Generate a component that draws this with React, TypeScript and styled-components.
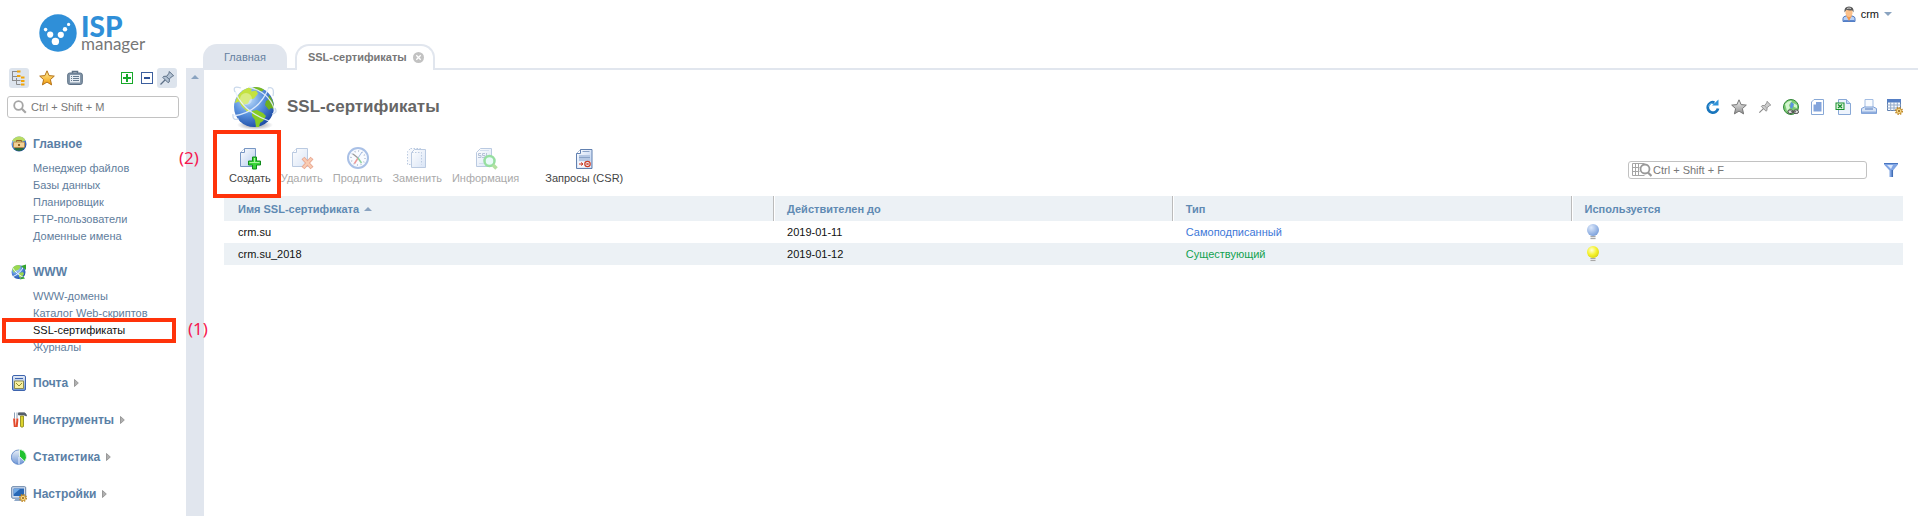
import React from "react";
import styled, { createGlobalStyle } from "styled-components";

const FRAME = "#e1e6ee";
const BAND = "#ecf1f5";
const MARK = "#ff330a";

const GlobalStyle = createGlobalStyle`
  *, *::before, *::after { box-sizing: border-box; }
  body {
    margin: 0;
    background: #fff;
    color: #111;
    font: 11px/16px "Liberation Sans", Arial, sans-serif;
  }
  button { font: inherit; color: inherit; background: none; border: 0; padding: 0; cursor: pointer; }
  a { color: inherit; text-decoration: none; }
  ul { list-style: none; margin: 0; padding: 0; }
  svg { display: block; flex: none; }
`;

const Page = styled.div`
  min-height: 100vh;
  display: flex;
  flex-direction: column;
`;

const Header = styled.header`
  display: flex;
  height: 68px;
`;

const Logo = styled.a`
  display: flex;
  align-items: flex-start;
  gap: 4px;
  width: 203px;
  padding: 14px 0 0 39px;
`;

const LogoWords = styled.span`
  display: flex;
  flex-direction: column;
  font-family: Lato, sans-serif;
`;

const LogoTop = styled.span`
  font-size: 28px;
  line-height: 24px;
  font-weight: 900;
  color: #2f8fd8;
`;

const LogoBottom = styled.span`
  font-size: 17px;
  line-height: 12px;
  color: #777;
`;

const Tabs = styled.nav`
  display: flex;
  align-items: flex-end;
  gap: 8px;
  flex: 1;
  margin-bottom: -2px;
  position: relative;
`;

const Tab = styled.div<{ $active?: boolean }>`
  display: flex;
  align-items: center;
  gap: 6px;
  height: 26px;
  padding: ${(p) => (p.$active ? "0 9px 2px 11px" : "0 21px")};
  border: 2px solid ${FRAME};
  border-width: ${(p) => (p.$active ? "2px 2px 0" : "0")};
  border-radius: 14px 14px 0 0;
  background: ${(p) => (p.$active ? "#fff" : FRAME)};
  color: ${(p) => (p.$active ? "#777" : "#6480a0")};
  font-weight: ${(p) => (p.$active ? "bold" : "normal")};
`;

const UserButton = styled.button`
  display: flex;
  align-items: center;
  align-self: flex-start;
  gap: 4px;
  height: 18px;
  margin: 5px 26px 0 0;
  svg:last-child { margin-left: 1px; }
`;

const Body = styled.div`
  display: flex;
  flex: 1;
`;

const Sidebar = styled.aside`
  width: 186px;
  flex: none;
`;

const SideTools = styled.div`
  display: flex;
  justify-content: space-between;
  padding: 0 9px;
`;

const ToolGroup = styled.div<{ $gap?: number }>`
  display: flex;
  gap: ${(p) => p.$gap ?? 0}px;
`;

const SideTool = styled.button<{ $on?: boolean }>`
  display: flex;
  align-items: center;
  justify-content: center;
  width: 20px;
  height: 20px;
  border-radius: 3px;
  background: ${(p) => (p.$on ? "#dde4ed" : "transparent")};
`;

const SearchBox = styled.label<{ $compact?: boolean }>`
  display: flex;
  align-items: center;
  gap: ${(p) => (p.$compact ? 1 : 4)}px;
  height: ${(p) => (p.$compact ? 18 : 22)}px;
  padding: 0 ${(p) => (p.$compact ? 3 : 5)}px;
  border: 1px solid #c2c2c2;
  border-radius: 3px;
  background: #fff;
  input {
    flex: 1;
    min-width: 0;
    padding: 0;
    border: 0;
    outline: 0;
    background: none;
    font: inherit;
    color: #333;
  }
  input::placeholder { color: #777; opacity: 1; }
`;

const SideSearch = styled(SearchBox)`
  margin: 8px 7px 16px;
`;

const Section = styled.section`
  margin-bottom: 17px;
`;

const SectionHead = styled.button`
  display: flex;
  align-items: center;
  gap: 6px;
  height: 20px;
  padding-left: 11px;
  font-size: 12px;
  font-weight: bold;
  color: #5a80a6;
`;

const MenuList = styled.ul`
  padding-top: 6px;
`;

const MenuItem = styled.li<{ $active?: boolean }>`
  position: relative;
  padding-left: 33px;
  line-height: 17px;
  color: ${(p) => (p.$active ? "#111" : "#5f7d9c")};
`;

const Strip = styled.button`
  display: flex;
  justify-content: center;
  align-items: flex-start;
  flex: none;
  width: 18px;
  padding-top: 7px;
  background: ${FRAME};
`;

const Main = styled.main`
  flex: 1;
  min-width: 0;
  padding: 14px 15px 20px 20px;
  border-top: 2px solid ${FRAME};
`;

const TitleRow = styled.div`
  display: flex;
  align-items: center;
  gap: 9px;
  padding-left: 8px;
  margin-bottom: 16px;
`;

const Title = styled.h1`
  flex: 1;
  margin: 0;
  font-size: 17px;
  line-height: 20px;
  color: #666;
`;

const Toolbar = styled.div`
  display: flex;
  align-items: flex-end;
  gap: 10px;
  padding: 0 4px 0 5px;
  margin-bottom: 10px;
`;

const ToolCell = styled.div<{ $apart?: boolean }>`
  position: relative;
  margin-left: ${(p) => (p.$apart ? 16 : 0)}px;
`;

const ToolButton = styled.button`
  display: flex;
  flex-direction: column;
  align-items: center;
  color: #444;
  white-space: nowrap;
  &:disabled { color: #aaa; cursor: default; }
  &:disabled svg { opacity: 0.5; }
`;

const FilterArea = styled.div`
  display: flex;
  align-items: center;
  gap: 16px;
  margin: 0 0 7px auto;
`;

const TableSearch = styled(SearchBox)`
  width: 239px;
`;

const Mark = styled.span<{ $x: number; $y: number; $w: number; $h: number }>`
  position: absolute;
  z-index: 2;
  left: ${(p) => p.$x}px;
  top: ${(p) => p.$y}px;
  width: ${(p) => p.$w}px;
  height: ${(p) => p.$h}px;
  border: 4px solid ${MARK};
  pointer-events: none;
`;

const MarkLabel = styled.span<{ $x: number; $y: number }>`
  position: absolute;
  z-index: 2;
  left: ${(p) => p.$x}px;
  top: ${(p) => p.$y}px;
  font: 17px/20px "Noto Sans", sans-serif;
  color: #f5174f;
`;

const Table = styled.table`
  width: 100%;
  table-layout: fixed;
  border-collapse: separate;
  border-spacing: 0;
  th, td { padding: 0 14px; text-align: left; }
  th {
    height: 25px;
    background: ${BAND};
    color: #5f8ab3;
  }
  th + th { border-left: 1px solid #bbb; box-shadow: inset 1px 0 #fff; padding-left: 13px; }
  td { height: 22px; }
  th:nth-child(1) { width: 32.7%; }
  th:nth-child(2), th:nth-child(3) { width: 23.75%; }
  tbody tr:nth-child(even) { background: ${BAND}; }
`;

const SortButton = styled.button`
  display: flex;
  align-items: center;
  gap: 5px;
  font-weight: bold;
`;

const Kind = styled.span<{ $color: string }>`
  color: ${(p) => p.$color};
`;

const Svg = ({ s = 16, v = 16, children }: { s?: number; v?: number; children: React.ReactNode }) => (
  <svg width={s} height={s} viewBox={`0 0 ${v} ${v}`} fill="none" aria-hidden="true">{children}</svg>
);

const DefsHolder = styled.svg`
  position: absolute;
`;

const Gradients = () => (
  <DefsHolder width="0" height="0" aria-hidden="true">
    <defs>
      <radialGradient id="sea" cx="35%" cy="30%" r="75%">
        <stop offset="0" stopColor="#c6e2fb" /><stop offset=".5" stopColor="#5b93df" /><stop offset="1" stopColor="#1c4ba5" />
      </radialGradient>
      <linearGradient id="sheet" x1="0" y1="0" x2="1" y2="1">
        <stop offset="0" stopColor="#fff" /><stop offset="1" stopColor="#b4cbee" />
      </linearGradient>
      <linearGradient id="steel" x1="0" y1="0" x2="0" y2="1">
        <stop offset="0" stopColor="#e8eef6" /><stop offset="1" stopColor="#6d96d6" />
      </linearGradient>
      <linearGradient id="gold" x1="0" y1="0" x2="0" y2="1">
        <stop offset="0" stopColor="#fff2a0" /><stop offset="1" stopColor="#f39a05" />
      </linearGradient>
      <linearGradient id="silver" x1="0" y1="0" x2="0" y2="1">
        <stop offset="0" stopColor="#f4f4f4" /><stop offset="1" stopColor="#8e8e8e" />
      </linearGradient>
      <radialGradient id="shade"><stop offset="0" stopColor="#556" stopOpacity=".7" /><stop offset="1" stopColor="#556" stopOpacity="0" /></radialGradient>
      <radialGradient id="bulbOff" cx="35%" cy="30%" r="80%"><stop offset="0" stopColor="#dce8fb" /><stop offset="1" stopColor="#7199d8" /></radialGradient>
      <radialGradient id="bulbOn" cx="40%" cy="35%" r="80%"><stop offset="0" stopColor="#ffffd8" /><stop offset=".5" stopColor="#f5f22c" /><stop offset="1" stopColor="#cdc80c" /></radialGradient>
    </defs>
  </DefsHolder>
);

const LogoMark = () => (
  <Svg s={38} v={38}>
    <circle cx="19" cy="19" r="18.7" fill="#2f8fd8" />
    <g fill="#fff">
      <circle cx="6.6" cy="15.6" r="1.8" /><circle cx="11.2" cy="20.6" r="3.1" /><circle cx="16.4" cy="27.4" r="3.7" />
      <circle cx="21.8" cy="20.8" r="3.1" /><circle cx="26" cy="15.2" r="2.2" /><circle cx="29.6" cy="10.4" r="1.6" />
    </g>
  </Svg>
);

const CloseIcon = () => (
  <Svg s={11} v={11}><circle cx="5.5" cy="5.5" r="5.5" fill="#c2c2c2" /><path d="M3.3 3.3l4.4 4.4M7.7 3.3L3.3 7.7" stroke="#fff" strokeWidth="1.3" /></Svg>
);
const UserIcon = () => (
  <Svg>
    <path d="M2 15.500v-3q0-1.700 2-2.200l2-.6h4l2 .6q2 .5 2 2.200v3z" fill="#b9d0f5" stroke="#4a75bd" />
    <path d="M2.500 14h11v1.500h-11z" fill="#5d88cf" />
    <path d="M5 9.500L8 15l3-5.500z" fill="#f39a4e" />
    <path d="M4.500 4h7v3.500q-1 3.500-3.500 3.500T4.500 7.500z" fill="#fbc08a" />
    <path d="M3.500 6.500q-.8-6 4.500-6t4.500 6l-1.300-2.300q-3 .6-5.800-.4z" fill="#5b5b5b" />
    <path d="M6 2.500q2-1 4 0" stroke="#ccc" />
  </Svg>
);
const Triangle = ({ dir, color = "#8aa3c0" }: { dir: "up" | "down"; color?: string }) => (
  <svg width="8" height="4" viewBox="0 0 8 4" aria-hidden="true"><path d={dir === "up" ? "M0 4h8L4 0z" : "M0 0h8L4 4z"} fill={color} /></svg>
);
const Chevron = () => (
  <svg width="5" height="8" viewBox="0 0 5 8" aria-hidden="true"><path d="M.5.500L4.300 4 .5 7.500z" fill="#b0b0b0" stroke="#999" /></svg>
);
const TreeIcon = () => (
  <Svg>
    <path d="M1.500 1v10M1 1.500h5M1 6.500h5M1.500 10.500h4M5.500 8v6.500H9.500M5.500 10.500h4" stroke="#8b8b8b" />
    <path d="M6 .5h3.500v2H6zM6 5h3.500v2H6zM10 6.500h3.500v2H10zM10 10h3.500v2H10zM10 13.500h3.500v2H10z" fill="#f0a30a" />
  </Svg>
);
const STAR = "M8 .8l2.100 4.800 5.200.500-3.900 3.500 1.200 5.300L8 12.100l-4.600 2.800 1.200-5.300L.7 6.100l5.200-.5z";
const StarIcon = ({ gray }: { gray?: boolean }) => (
  <Svg><path d={STAR} fill={gray ? "url(#silver)" : "url(#gold)"} stroke={gray ? "#777" : "#b4731a"} strokeLinejoin="round" /></Svg>
);
const CaseIcon = () => (
  <Svg>
    <path d="M5.500 3V1.500h5V3" stroke="#5f7286" strokeWidth="1.500" />
    <rect x=".7" y="3" width="14.600" height="11.500" rx="2" fill="#8395a8" stroke="#5b6f84" />
    <rect x="3" y="5" width="10" height="7.500" fill="#e6ecf2" />
    <path d="M4 6.500h1M6 6.500h6M4 8.500h1M6 8.500h6M4 10.500h1M6 10.500h6" stroke="#667b90" />
  </Svg>
);
const BoxIcon = ({ plus }: { plus?: boolean }) => (
  <Svg s={12} v={12}>
    <rect x=".5" y=".5" width="11" height="11" fill="#fff" stroke={plus ? "#17a92a" : "#3c5f9e"} />
    <path d={plus ? "M2 6h8M6 2v8" : "M3 6h6"} stroke={plus ? "#17a92a" : "#2d5196"} strokeWidth="2" />
  </Svg>
);
const PinIcon = ({ light }: { light?: boolean }) => (
  <Svg s={light ? 14 : 16}>
    <path d="M1.500 14.500L6.500 9.500" stroke={light ? "#888" : "#5c6f86"} strokeWidth="1.300" />
    <path d="M10.300 1.500l4.300 4.300-1.400.600-2.800 2.400-.2 3.200-1 .8-5.400-5.400.8-1 3.200-.2 2.200-3z" fill={light ? "#ccc" : "#b3c2d3"} stroke={light ? "#8c8c8c" : "#5c6f86"} strokeLinejoin="round" />
    <path d="M7.300 6.500l2.600 2.600" stroke={light ? "#999" : "#5c6f86"} />
  </Svg>
);
const Magnifier = () => (
  <Svg s={14} v={14}><circle cx="5.500" cy="5.500" r="4.300" stroke="#a5a5a5" strokeWidth="1.800" /><path d="M8.800 8.800l4 4" stroke="#a5a5a5" strokeWidth="2.200" /></Svg>
);
const GridMagnifier = () => (
  <svg width="20" height="14" viewBox="0 0 20 14" fill="none" aria-hidden="true">
    <path d="M.5.500h12M.5 4.500h7M.5 8.500h7M.5 12.500h12M.5.500v12M3.500.500v12M6.500.500v12" stroke="#a5a5a5" />
    <circle cx="13" cy="6" r="4.500" fill="#fff" stroke="#999" strokeWidth="1.800" /><path d="M16 9.500l3.500 3.500" stroke="#999" strokeWidth="2.200" />
  </svg>
);
const MainIcon = () => (
  <Svg>
    <circle cx="8" cy="8" r="7.500" fill="url(#sea)" />
    <path d="M1 5q3-5 8-4.500 4 .5 5.500 4L9 6 3 5.500z" fill="#b9dc63" />
    <path d="M3 13q5 4 10 0l-2-2H5z" fill="#2b6c3b" />
    <path d="M5.500 6V4.500h5V6" stroke="#91602b" />
    <rect x="2.500" y="6" width="11" height="5.500" rx="1" fill="#f2d195" stroke="#b58a4c" />
    <path d="M7 8h2v2H7z" fill="#946126" />
  </Svg>
);
const WwwIcon = () => (
  <Svg>
    <circle cx="7.500" cy="8" r="7" fill="url(#sea)" />
    <path d="M1 5q2-4 7-4l2 2-3 3-3 1-1 2zM8 9l4-1 1 2-3 4-2-1z" fill="#9ad850" />
    <path d="M1 3q5 8 13 11M1 13Q9 10 13 2" stroke="#eef5ff" />
    <path d="M10 2l5-1.500L15 6z" fill="#34a52c" />
    <path d="M8.500 15.500l3.500-3 2 2z" fill="#34a52c" />
  </Svg>
);
const MailIcon = () => (
  <Svg>
    <rect x="1.500" y=".5" width="13" height="15" rx="1.500" fill="url(#steel)" stroke="#3e64ae" />
    <path d="M4 3.500h8" stroke="#3e64ae" /><path d="M3.500 6h9v7.500h-9z" fill="#f8f0a0" stroke="#8a8a50" />
    <path d="M5 8l3 3 3-3" stroke="#8f8a30" />
  </Svg>
);
const ToolsIcon = () => (
  <Svg>
    <path d="M3.500 .5v6M6 .5v6" stroke="#8a9fb6" />
    <path d="M3.200 6.500v2l.6 6.500M6.300 6.500v2l-.6 6.500" stroke="#e2492b" strokeWidth="2" />
    <path d="M7.500.8h6q2 .8 2 3.200L13 3H7.500z" fill="#5e6977" stroke="#333c46" strokeWidth=".6" />
    <path d="M9.500 4h3v10.500q-1.500 1.500-3 0z" fill="#ddd42c" stroke="#858013" strokeWidth=".8" />
  </Svg>
);
const StatsIcon = () => (
  <Svg>
    <circle cx="7.500" cy="8.200" r="7.200" fill="url(#steel)" stroke="#4775be" strokeWidth=".7" />
    <path d="M8.500 .3A7.500 7.500 0 0 1 13.800 12.500L8.500 7.500z" fill="#20c22f" stroke="#fff" strokeWidth=".8" />
    <path d="M8 8v7.500" stroke="#eef4ff" />
  </Svg>
);
const Gear = ({ x, y }: { x: number; y: number }) => (
  <g>
    <circle cx={x} cy={y} r="3.200" stroke="#bd8521" strokeWidth="1.600" strokeDasharray="1.500 1" />
    <circle cx={x} cy={y} r="2.600" fill="#f7dc8b" stroke="#c58d27" strokeWidth=".7" /><circle cx={x} cy={y} r="1" fill="#966112" />
  </g>
);
const SettingsIcon = () => (
  <Svg>
    <rect x=".7" y=".7" width="14" height="11.500" rx="1" fill="#cfddf0" stroke="#6480a4" />
    <rect x="2.500" y="2.500" width="10.500" height="7.500" fill="#2767b5" /><path d="M3 3h6L3 8z" fill="#6fa8e5" />
    <path d="M5 12h5l1 3H3z" fill="#8fa9ca" /><Gear x={12} y={12} />
  </Svg>
);
const BigGlobe = () => (
  <Svg s={46} v={46}>
    <ellipse cx="23" cy="41" rx="18" ry="5" fill="url(#shade)" />
    <circle cx="22" cy="23" r="20" fill="url(#sea)" />
    <path d="M3 19Q6 7 17 3.500l3 1-1 3 5-1 2 3-4 5-4 1-2 4-4 1 1 4 4 1 2 3-4-1-5-5-3-5z" fill="#c4e23f" />
    <path d="M20 3.500q6-1.500 12 2l-2 2-5-1z" fill="#7abb1f" />
    <path d="M20 27l5-1 6 3 3 3-3 5-3 2-1 4-3 0-1-7-3-4z" fill="#86cb24" />
    <path d="M37 11q5 6 5 14l-3-1-2 2-4-5 1-4 2-1z" fill="#6db01f" />
    <g stroke="#e6f1ff" strokeWidth="1.300" opacity=".9">
      <path d="M3 7q7 20 34 30M1 32Q27 29 37 3M17 3q22 6 26 25" />
      <path d="M3 8Q0 1 9 4M36 4q7-2 5 8M1 30q-1 7 6 5M43 24q3 5-3 6" stroke="#c5d5ea" />
    </g>
    <circle cx="14" cy="15" r="6" fill="#fff" opacity=".35" />
  </Svg>
);
const RefreshIcon = () => (
  <Svg><path d="M9.500 3.500A5.200 5.200 0 1 0 13 9.500" stroke="#1976bd" strokeWidth="2.800" /><path d="M7 6.500h6.500V.5z" fill="#2f94da" /><path d="M3.500 7.500q.5-3 4-3.500" stroke="#70bdf0" /></Svg>
);
const LinkGlobeIcon = () => (
  <Svg>
    <circle cx="8" cy="8" r="7.500" fill="#7ccc74" stroke="#33873a" />
    <path d="M2 5q4-4 7-3L6 6l1 3-3 3zM10 4l4 2v3l-3-1z" fill="#d4f5cf" /><path d="M8 3l3 2-2 5-2-2z" fill="#5b93df" />
    <rect x="5" y="11" width="5" height="3.500" rx="1.700" fill="#ddd" stroke="#4c4c4c" /><rect x="10.500" y="11" width="5" height="3.500" rx="1.700" fill="#ddd" stroke="#4c4c4c" />
    <path d="M8 12.800h5" stroke="#4c4c4c" />
  </Svg>
);
const CopyIcon = () => (
  <Svg><path d="M5 .5h9.500v15H2.500V3z" fill="#fff" stroke="#88a8d6" /><path d="M7 3h5.500v9.500h-8V5.500H7z" fill="#83a4db" /></Svg>
);
const ExcelIcon = () => (
  <Svg>
    <path d="M3.500.500h8l4 4v11h-12z" fill="#eef4fd" stroke="#88a8d6" /><path d="M11.500.500v4h4" fill="#c7daf3" stroke="#88a8d6" />
    <rect x="1" y="4" width="8" height="6.500" fill="#e5f6e2" stroke="#16902b" /><path d="M3 5.500l4 3.500M7 5.500L3 9" stroke="#16902b" strokeWidth="1.400" />
  </Svg>
);
const PrinterIcon = () => (
  <Svg><path d="M4 .5h8V9H4z" fill="#f8fbff" stroke="#a3bde3" /><path d="M.5 9.500l3-1.500h9l3 1.500v5H.5z" fill="#d6e3f6" stroke="#7c9fd6" /><path d="M1 12.500h14v2H1z" fill="#8fadde" /><path d="M4 10h8" stroke="#5279bb" /></Svg>
);
const TableGearIcon = () => (
  <Svg><path d="M.5.500h13v11H.5z" fill="#f8fbff" stroke="#5f7fae" /><path d="M0 0h14v3.500H0z" fill="#557fc5" /><path d="M3.700 3v9M7 3v9M10.300 3v9M0 6h14M0 9h14" stroke="#92a9c9" /><Gear x={12} y={12} /></Svg>
);
const FilterIcon = () => (
  <Svg><path d="M1 1h14v1.500L10 8.500V15H6.500V8.500L1 2.500z" fill="#80a5e4" /><path d="M1 1.500h14" stroke="#4774bf" /><path d="M4 3h6L8 7z" fill="#dbe8fb" /><path d="M9.300 8v7" stroke="#426fb5" strokeWidth="1.500" /></Svg>
);
const Sheet = ({ dashed }: { dashed?: boolean }) => (
  <path d="M6.500 2.500H17.500V20.500H2.500V6.500z" fill="url(#sheet)" stroke="#7897c4" strokeDasharray={dashed ? "1.500 1.500" : undefined} />
);
const CreateIcon = () => (
  <Svg s={24} v={24}><Sheet /><path d="M6.500 2.500v4h-4" fill="#fff" stroke="#7897c4" /><path d="M14.500 11h4v4h4v4h-4v4h-4v-4h-4v-4h4z" fill="#3ad638" stroke="#128c1c" /><path d="M16.500 12v5M11.500 16.500h10" stroke="#a8f59c" /></Svg>
);
const DeleteIcon = () => (
  <Svg s={24} v={24}><Sheet /><path d="M6.500 2.500v4h-4" fill="#fff" stroke="#7897c4" /><path d="M13 12l9 10M22 12l-9 10" stroke="#d4542a" strokeWidth="4" /><path d="M13.500 12.500l8 9M21.500 12.500l-8 9" stroke="#f59a68" strokeWidth="2" /></Svg>
);
const ClockIcon = () => (
  <Svg s={24} v={24}>
    <circle cx="12" cy="12" r="10" fill="#f4f8ff" stroke="#5583cf" strokeWidth="2" /><circle cx="12" cy="12" r="7" stroke="#5f789d" strokeWidth="1.500" strokeDasharray="1 2.660" />
    <path d="M12 12L7 8" stroke="#333" strokeWidth="1.300" /><path d="M12 12l4-6" stroke="#4a7ac8" /><path d="M8.500 17.500L12 12" stroke="#d33" strokeWidth="1.500" /><path d="M12 12l3.500 5" stroke="#2a4" strokeWidth="1.500" />
  </Svg>
);
const ReplaceIcon = () => (
  <Svg s={24} v={24}><path d="M5.500 2.500h10v16h-13v-13z" stroke="#7897c4" strokeDasharray="1.500 1.500" fill="#eef3fb" /><path d="M9.500 3.500h11v18h-14v-15z" fill="url(#sheet)" stroke="#7897c4" /><path d="M7 6.500h9.500v12" stroke="#7897c4" strokeDasharray="1.500 1.500" /></Svg>
);
const InfoIcon = () => (
  <Svg s={24} v={24}>
    <Sheet /><path d="M6 4.500h9M5 17.500h7" stroke="#a9bfdf" />
    <path d="M7 7.500H4.500v2H7v2H4M11 7.500H8.500v2H11v2H8M12.500 7v4.500H15" stroke="#7088b2" />
    <circle cx="15.500" cy="15" r="5" fill="#d5f7f5" stroke="#30c044" strokeWidth="2.500" /><path d="M19 19l3.500 3.500" stroke="#6ac345" strokeWidth="3.500" />
  </Svg>
);
const CsrIcon = () => (
  <Svg s={24} v={24}>
    <path d="M8.500 3.500h11.500v19H4.500V7.500z" fill="url(#sheet)" stroke="#6180b0" /><path d="M8.500 3.500v4h-4" fill="#fff" stroke="#6180b0" />
    <path d="M7 9h11v6H7z" fill="#b5c8e4" /><path d="M6 15.500h13v6H6z" fill="#f4f7fd" />
    <path d="M10.500 5.500h7M7 11.500h11" stroke="#8aa3c7" /><path d="M7 18h4M9 16.500l2 1.500-2 1.500" stroke="#cc3a24" />
    <circle cx="15.500" cy="18" r="2.700" stroke="#cc3a24" strokeWidth="1.200" /><path d="M14.500 17l2 2M16.500 17l-2 2" stroke="#cc3a24" />
  </Svg>
);
const Bulb = ({ on }: { on: boolean }) => (
  <svg width="16" height="18" viewBox="0 0 16 18" role="img" aria-label={on ? "Да" : "Нет"}>
    <path d="M5.500 12h5v4.500h-5z" fill="#e6e6e6" /><path d="M5.500 13.500h5M5.500 15.500h5" stroke="#a8a8a8" />
    <circle cx="8" cy="7" r="6" fill={on ? "url(#bulbOn)" : "url(#bulbOff)"} />
  </svg>
);

type MenuSection = { title: string; icon: React.ReactNode; items: string[] };

const SECTIONS: MenuSection[] = [
  { title: "Главное", icon: <MainIcon />, items: ["Менеджер файлов", "Базы данных", "Планировщик", "FTP-пользователи", "Доменные имена"] },
  { title: "WWW", icon: <WwwIcon />, items: ["WWW-домены", "Каталог Web-скриптов", "SSL-сертификаты", "Журналы"] },
  { title: "Почта", icon: <MailIcon />, items: [] },
  { title: "Инструменты", icon: <ToolsIcon />, items: [] },
  { title: "Статистика", icon: <StatsIcon />, items: [] },
  { title: "Настройки", icon: <SettingsIcon />, items: [] },
];

const CURRENT = "SSL-сертификаты";

const ACTIONS = [
  { label: "Создать", icon: <CreateIcon />, enabled: true },
  { label: "Удалить", icon: <DeleteIcon />, enabled: false },
  { label: "Продлить", icon: <ClockIcon />, enabled: false },
  { label: "Заменить", icon: <ReplaceIcon />, enabled: false },
  { label: "Информация", icon: <InfoIcon />, enabled: false },
  { label: "Запросы (CSR)", icon: <CsrIcon />, enabled: true, apart: true },
];

const PAGE_TOOLS = [
  { label: "Обновить", icon: <RefreshIcon /> },
  { label: "Избранное", icon: <StarIcon gray /> },
  { label: "Закрепить", icon: <PinIcon light /> },
  { label: "Ссылка", icon: <LinkGlobeIcon /> },
  { label: "Копировать", icon: <CopyIcon /> },
  { label: "Экспорт", icon: <ExcelIcon /> },
  { label: "Печать", icon: <PrinterIcon /> },
  { label: "Колонки", icon: <TableGearIcon /> },
];

const PageTool = styled.button`
  display: flex;
  justify-content: center;
  align-items: center;
  width: 16px;
  height: 16px;
`;

const ROWS = [
  { name: "crm.su", until: "2019-01-11", kind: "Самоподписанный", color: "#4078d8", used: false },
  { name: "crm.su_2018", until: "2019-01-12", kind: "Существующий", color: "#12a150", used: true },
];

export default function App() {
  return (
    <Page>
      <GlobalStyle />
      <Gradients />
      <Header>
        <Logo href="#">
          <LogoMark />
          <LogoWords><LogoTop>ISP</LogoTop><LogoBottom>manager</LogoBottom></LogoWords>
        </Logo>
        <Tabs>
          <Tab><a href="#">Главная</a></Tab>
          <Tab $active><a href="#">{CURRENT}</a><button aria-label="Закрыть"><CloseIcon /></button></Tab>
        </Tabs>
        <UserButton><UserIcon />crm<Triangle dir="down" /></UserButton>
      </Header>
      <Body>
        <Sidebar>
          <SideTools>
            <ToolGroup $gap={8}>
              <SideTool $on aria-label="Меню"><TreeIcon /></SideTool>
              <SideTool aria-label="Избранное"><StarIcon /></SideTool>
              <SideTool aria-label="История"><CaseIcon /></SideTool>
            </ToolGroup>
            <ToolGroup>
              <SideTool aria-label="Развернуть"><BoxIcon plus /></SideTool>
              <SideTool aria-label="Свернуть"><BoxIcon /></SideTool>
              <SideTool $on aria-label="Закрепить"><PinIcon /></SideTool>
            </ToolGroup>
          </SideTools>
          <SideSearch><Magnifier /><input type="text" placeholder="Ctrl + Shift + M" aria-label="Поиск по меню" /></SideSearch>
          {SECTIONS.map((s) => (
            <Section key={s.title}>
              <SectionHead>{s.icon}{s.title}{s.items.length === 0 && <Chevron />}</SectionHead>
              {s.items.length > 0 && (
                <MenuList>
                  {s.items.map((item) => (
                    <MenuItem key={item} $active={item === CURRENT}>
                      <a href="#">{item}</a>
                      {item === CURRENT && (
                        <><Mark $x={2} $y={-4} $w={174} $h={25} /><MarkLabel $x={188} $y={-3}>(1)</MarkLabel></>
                      )}
                    </MenuItem>
                  ))}
                </MenuList>
              )}
            </Section>
          ))}
        </Sidebar>
        <Strip aria-label="Скрыть меню"><Triangle dir="up" /></Strip>
        <Main>
          <TitleRow>
            <BigGlobe />
            <Title>{CURRENT}</Title>
            <ToolGroup $gap={10}>
              {PAGE_TOOLS.map((t) => <PageTool key={t.label} aria-label={t.label}>{t.icon}</PageTool>)}
            </ToolGroup>
          </TitleRow>
          <Toolbar>
            {ACTIONS.map((a, i) => (
              <ToolCell key={a.label} $apart={a.apart}>
                <ToolButton disabled={!a.enabled}>{a.icon}{a.label}</ToolButton>
                {i === 0 && (
                  <><Mark $x={-16} $y={-16} $w={68} $h={68} /><MarkLabel $x={-50} $y={2}>(2)</MarkLabel></>
                )}
              </ToolCell>
            ))}
            <FilterArea>
              <TableSearch $compact><GridMagnifier /><input type="text" placeholder="Ctrl + Shift + F" aria-label="Поиск по таблице" /></TableSearch>
              <PageTool aria-label="Фильтр"><FilterIcon /></PageTool>
            </FilterArea>
          </Toolbar>
          <Table>
            <thead>
              <tr>
                <th><SortButton>Имя SSL-сертификата<Triangle dir="up" /></SortButton></th>
                <th>Действителен до</th>
                <th>Тип</th>
                <th>Используется</th>
              </tr>
            </thead>
            <tbody>
              {ROWS.map((r) => (
                <tr key={r.name}>
                  <td>{r.name}</td>
                  <td>{r.until}</td>
                  <td><Kind $color={r.color}>{r.kind}</Kind></td>
                  <td><Bulb on={r.used} /></td>
                </tr>
              ))}
            </tbody>
          </Table>
        </Main>
      </Body>
    </Page>
  );
}
